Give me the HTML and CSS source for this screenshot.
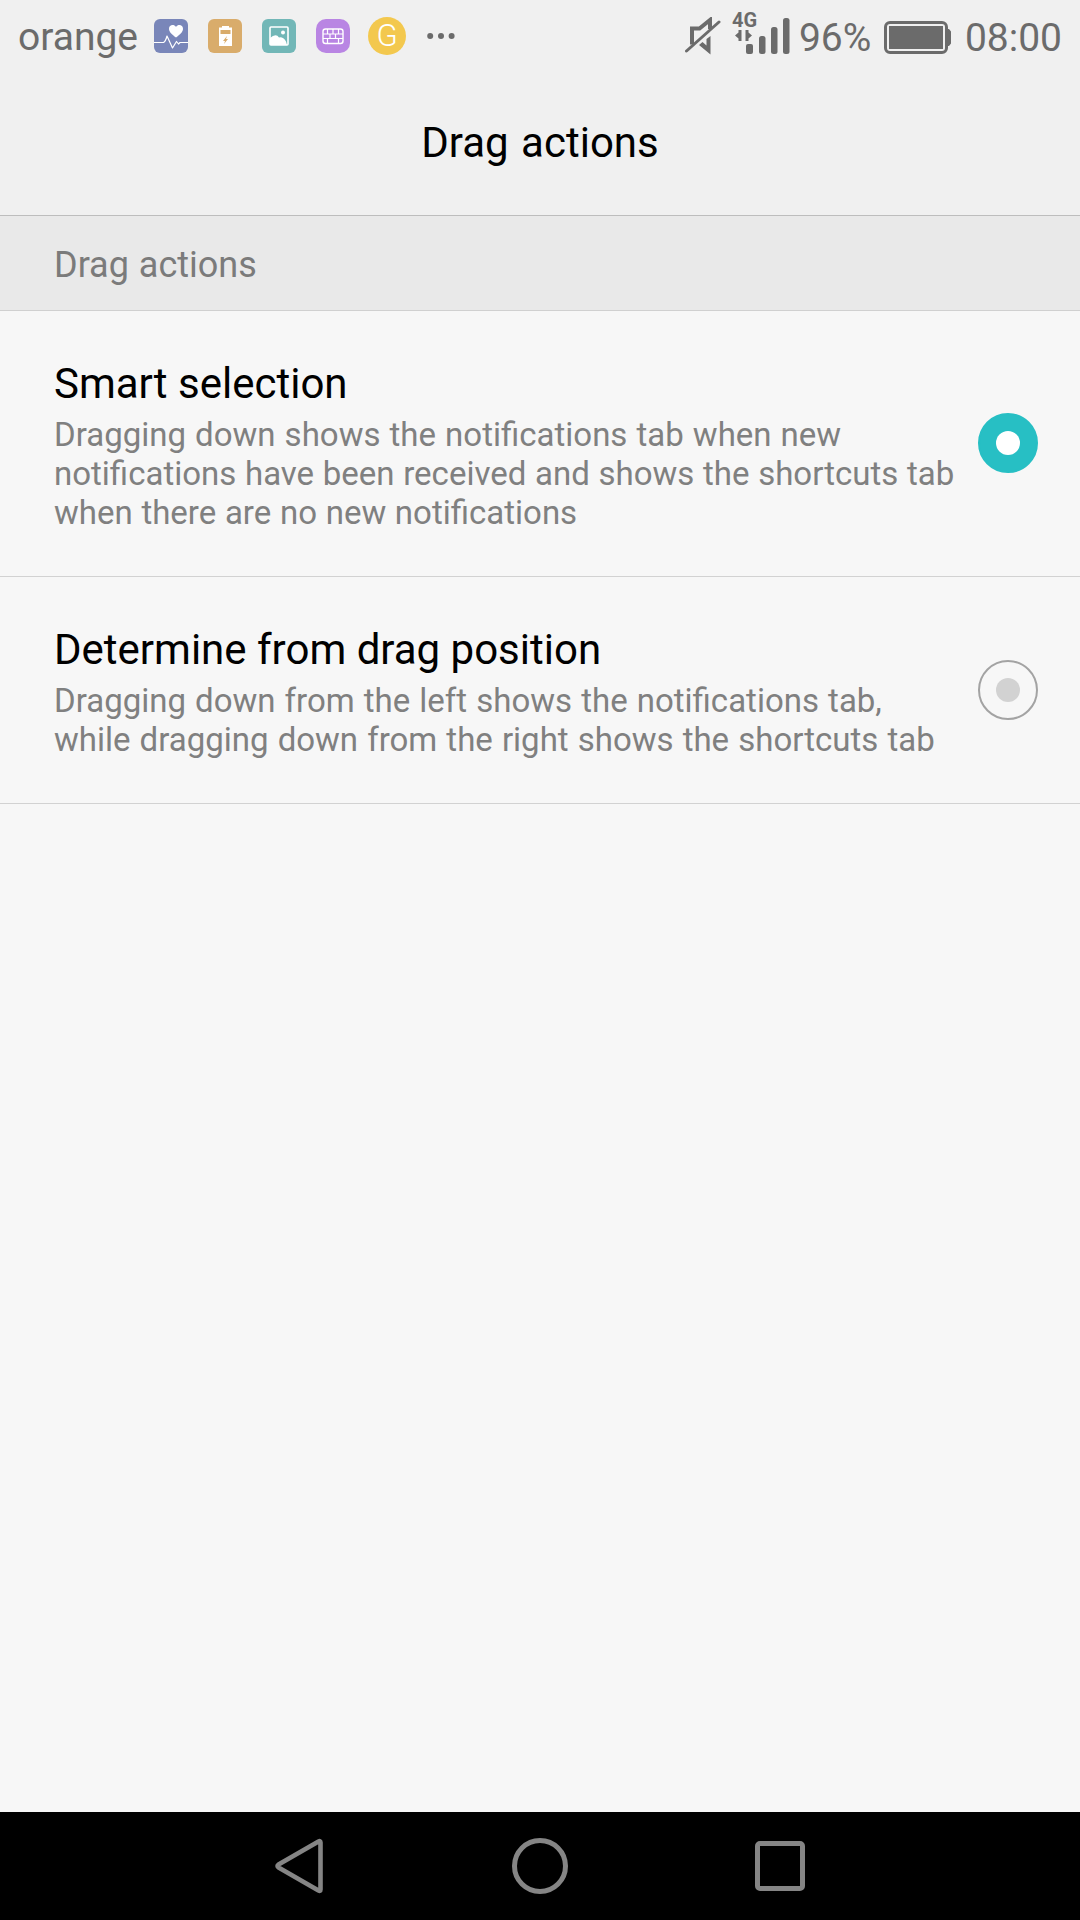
FILE: index.html
```html
<!DOCTYPE html>
<html lang="en">
<head>
  <meta charset="UTF-8">
  <meta name="viewport" content="width=device-width, initial-scale=1.0">
  <title>Drag actions</title>
  <link rel="stylesheet" href="styles.css">
</head>
<body>
  <div class="status-bar">
    <div class="status-left">
      <span class="carrier">orange</span>
      <div class="notifications">
        <svg width="34" height="34" viewBox="0 0 34 34">
          <rect width="34" height="34" rx="6" fill="#7986b9"/>
          <path d="M0 23.500h9.500q2-1 3.500-6.500l5.500 12 4-6.500 2 2.500 1.500-1.500h8" fill="none" stroke="#fff" stroke-width="1.200" stroke-linejoin="round"/>
          <path d="M22 18.500c-4-3-7-5.500-7-8.800 0-4 5-5 7-1.700 2-3.300 7-2.300 7 1.700 0 3.300-3 5.800-7 8.800z" fill="#fff"/>
        </svg>
        <svg width="34" height="34" viewBox="0 0 34 34">
          <rect width="34" height="34" rx="6" fill="#d9ac6b"/>
          <path d="M14 7h7v1.500h3v18.500H11V8.500h3z" fill="#fff"/>
          <path d="M12.500 11h10v4h-10zM19 17l-4 5h2l-1 3 4-5h-2z" fill="#d9ac6b"/>
        </svg>
        <svg width="34" height="34" viewBox="0 0 34 34">
          <rect width="34" height="34" rx="6" fill="#72b7b7"/>
          <rect x="8" y="8" width="18" height="18" rx="1" fill="none" stroke="#fff" stroke-width="1.600"/>
          <circle cx="21" cy="13.500" r="2" fill="#fff"/>
          <path d="M8 19q6-5 9-.5 4-1 7 4l1 3.500H8z" fill="#fff"/>
        </svg>
        <svg width="34" height="34" viewBox="0 0 34 34">
          <rect width="34" height="34" rx="10" fill="#b985e3"/>
          <rect x="7" y="10" width="20" height="14.500" rx="2.500" fill="none" stroke="#fff" stroke-width="1.400"/>
          <path d="M7 15h20M7 19.500h20M11.500 10v5M17 10v5M22.500 10v5M14 15v4.500M19.500 15v4.500M11.500 19.500v5M22.500 19.500v5" stroke="#fff" stroke-width="1.200"/>
        </svg>
      </div>
      <span class="badge">G</span>
      <svg class="more" width="28" height="8" viewBox="0 0 28 8" fill="#6b6b6b">
        <circle cx="3.200" cy="4" r="3"/>
        <circle cx="14" cy="4" r="3"/>
        <circle cx="24.600" cy="4" r="3"/>
      </svg>
    </div>
    <div class="status-right">
      <svg class="mute" width="37" height="38" viewBox="0 0 37 38">
        <path d="M8 27.500V11.500H15.500L26 3v9" fill="none" stroke="#6b6b6b" stroke-width="4"/>
        <path d="M26.500 19v18.500L15 28l3.500-3 4 3.500V22z" fill="#6b6b6b"/>
        <path d="M2.500 34L35 5" stroke="#6b6b6b" stroke-width="3" stroke-linecap="round"/>
      </svg>
      <svg class="signal" width="58" height="44" viewBox="0 0 58 44" fill="#6b6b6b">
        <text class="network" x="0" y="16">4G</text>
        <path d="M9.500 19v11h-3v-2.500L3 24.500l3.500-3V19zM13.500 19h3v2.500l3.500 3-3.500 3V30h-3z"/>
        <rect x="14" y="33" width="7" height="10" rx="2"/>
        <rect x="27" y="25" width="6.500" height="18" rx="2.500"/>
        <rect x="39" y="16" width="6.500" height="27" rx="2.500"/>
        <rect x="51" y="7" width="6.500" height="36" rx="2.500"/>
      </svg>
      <span class="percent">96%</span>
      <svg class="battery" width="67" height="33" viewBox="0 0 67 33">
        <rect x="1.500" y="1.500" width="61" height="30" rx="4.500" fill="none" stroke="#6b6b6b" stroke-width="3"/>
        <path d="M5 5h54v23H5zM63 8h2l2 2.500v12L65 25h-2z" fill="#6b6b6b"/>
      </svg>
      <span class="clock">08:00</span>
    </div>
  </div>

  <header>
    <h1>Drag actions</h1>
  </header>

  <main>
    <h2 class="section-title">Drag actions</h2>
    <div class="option">
      <div class="option-text">
        <h3>Smart selection</h3>
        <p>Dragging down shows the notifications tab when new<br>notifications have been received and shows the shortcuts tab<br>when there are no new notifications</p>
      </div>
      <span class="radio checked"></span>
    </div>
    <div class="option">
      <div class="option-text">
        <h3>Determine from drag position</h3>
        <p class="wide">Dragging down from the left shows the notifications tab,<br>while dragging down from the right shows the shortcuts tab</p>
      </div>
      <span class="radio"></span>
    </div>
  </main>

  <nav>
    <svg width="50" height="56" viewBox="0 0 50 56">
      <path d="M3.500 26.500L43.500 3.500q2-1 2 1v47q0 2-2 1L3.500 29.500q-2-1.500 0-3z" fill="none" stroke="#858585" stroke-width="4.600" stroke-linejoin="round"/>
    </svg>
    <svg width="56" height="56" viewBox="0 0 56 56">
      <circle cx="28" cy="28" r="25.500" fill="none" stroke="#858585" stroke-width="5"/>
    </svg>
    <svg width="50" height="50" viewBox="0 0 50 50">
      <rect x="2.500" y="2.500" width="45" height="45" rx="2.500" fill="none" stroke="#858585" stroke-width="5"/>
    </svg>
  </nav>
</body>
</html>
```
FILE: styles.css
```css
* {
  box-sizing: border-box;
}
body {
  display: flex;
  flex-direction: column;
  height: 1920px;
  margin: 0;
  background-color: #f7f7f7;
  color: #000;
  font-family: Roboto, sans-serif;
}
h1, h2, h3, p {
  margin: 0;
  font-weight: 400;
}
svg {
  display: block;
  flex-shrink: 0;
}
.status-bar {
  display: flex;
  justify-content: space-between;
  height: 72px;
  padding: 0 18px;
  background-color: #f0f0f0;
  color: #6b6b6b;
  font-size: 39px;
  line-height: 48px;
}
.status-left, .status-right {
  display: flex;
  align-items: center;
}
.carrier {
  width: 136px;
  padding-top: 2px;
}
.notifications {
  display: flex;
  gap: 20px;
}
.badge {
  width: 38px;
  height: 38px;
  margin: 0 21px 0 18px;
  border-radius: 50%;
  background-color: #f3c84e;
  color: #fff;
  font-size: 31px;
  font-weight: 300;
  line-height: 38px;
  text-align: center;
}
.signal {
  margin: -6px 9px 0 11px;
  overflow: visible;
}
.network {
  font-size: 20px;
  font-weight: 700;
}
.percent {
  width: 75px;
}
.battery {
  margin: 3px 14px 0 10px;
}
.percent, .clock {
  padding-top: 4px;
}
header {
  height: 144px;
  border-bottom: 1px solid #bdbdbd;
  background-color: #f0f0f0;
  text-align: center;
}
h1 {
  padding-top: 46px;
  font-size: 42px;
  line-height: 49px;
  word-spacing: 2px;
}
main {
  flex: 1;
}
.section-title {
  height: 95px;
  padding: 28px 54px 0;
  border-bottom: 1px solid #d0d0d0;
  background-color: #e9e9e9;
  color: #7b7b7b;
  font-size: 36px;
  line-height: 42px;
  word-spacing: 1px;
}
.option {
  display: flex;
  align-items: center;
  justify-content: space-between;
  padding: 48px 42px 44px 54px;
  border-bottom: 1px solid #d2d2d2;
}
.option-text {
  white-space: nowrap;
}
h3 {
  margin-bottom: 7px;
  font-size: 42px;
  line-height: 49px;
}
.option p {
  color: #808080;
  font-size: 33px;
  line-height: 39px;
  word-spacing: 0.5px;
}
.option p::first-line, .option .wide {
  word-spacing: 0.9px;
}
.radio {
  display: flex;
  align-items: center;
  justify-content: center;
  width: 60px;
  height: 60px;
  margin-top: -5px;
  border: 2px solid #a3a3a3;
  border-radius: 50%;
}
.radio::after {
  content: "";
  width: 24px;
  height: 24px;
  border-radius: 50%;
  background-color: #d2d2d2;
}
.radio.checked {
  border-color: #27bfc4;
  background-color: #27bfc4;
}
.radio.checked::after {
  background-color: #fff;
}
nav {
  display: flex;
  align-items: center;
  justify-content: space-between;
  height: 108px;
  padding: 0 275px;
  background-color: #000;
}
```
